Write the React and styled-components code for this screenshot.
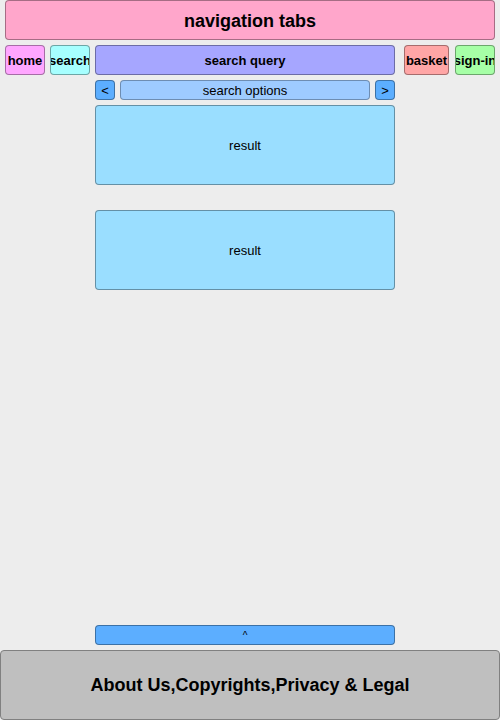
import React from 'react';
import styled, { createGlobalStyle } from 'styled-components';

const GlobalStyle = createGlobalStyle`
  html, body {
    margin: 0;
    padding: 0;
    background: #ededed;
    font-family: "Liberation Sans", Arial, sans-serif;
    color: #000;
  }
`;

const App = () => {
  return (
    <Page>
      <GlobalStyle />
      <Header>navigation tabs</Header>
      <NavRow>
        <Tab $bg="#ffa6ff" $w={40}>home</Tab>
        <Tab $bg="#a6ffff" $w={40}>search</Tab>
        <Tab $bg="#a6a6ff" $w={300} $after={4}>search query</Tab>
        <Tab $bg="#ffa6a6" $w={45}>basket</Tab>
        <Tab $bg="#a6ffa6" $w={40} $before={1}>sign-in</Tab>
      </NavRow>
      <Column>
        <OptionsRow>
          <ArrowButton>&lt;</ArrowButton>
          <Options>search options</Options>
          <ArrowButton>&gt;</ArrowButton>
        </OptionsRow>
        <Results>
          <Result>result</Result>
          <Result>result</Result>
        </Results>
      </Column>
      <Spacer />
      <Column>
        <TopButton>^</TopButton>
      </Column>
      <Footer>About Us,Copyrights,Privacy &amp; Legal</Footer>
    </Page>
  );
};

const Page = styled.div`
  min-height: 100vh;
  display: flex;
  flex-direction: column;
  box-sizing: border-box;
`;

const Header = styled.div`
  height: 40px;
  margin: 0 5px;
  padding-top: 2px;
  box-sizing: border-box;
  background: #ffa6cb;
  border: 1px solid rgba(0, 0, 0, 0.35);
  border-radius: 4px;
  display: flex;
  align-items: center;
  justify-content: center;
  font-size: 18px;
  font-weight: bold;
`;

const NavRow = styled.div`
  display: flex;
  gap: 5px;
  padding: 0 5px;
  margin-top: 5px;
  height: 30px;
`;

const Tab = styled.div`
  width: ${(p) => p.$w}px;
  flex: none;
  margin-left: ${(p) => p.$before || 0}px;
  margin-right: ${(p) => p.$after || 0}px;
  box-sizing: border-box;
  background: ${(p) => p.$bg};
  border: 1px solid rgba(0, 0, 0, 0.35);
  border-radius: 4px;
  display: flex;
  align-items: center;
  justify-content: center;
  overflow: hidden;
  white-space: nowrap;
  font-size: 13px;
  font-weight: bold;
`;

const Column = styled.div`
  width: 300px;
  margin-left: 95px;
  display: flex;
  flex-direction: column;
`;

const OptionsRow = styled.div`
  display: flex;
  gap: 5px;
  height: 20px;
  margin-top: 5px;
`;

const ArrowButton = styled.div`
  width: 20px;
  flex: none;
  box-sizing: border-box;
  background: #5caeff;
  border: 1px solid rgba(0, 0, 0, 0.35);
  border-radius: 4px;
  display: flex;
  align-items: center;
  justify-content: center;
  font-size: 13px;
`;

const Options = styled.div`
  flex: 1;
  box-sizing: border-box;
  background: #9ecbff;
  border: 1px solid rgba(0, 0, 0, 0.3);
  border-radius: 4px;
  display: flex;
  align-items: center;
  justify-content: center;
  font-size: 13px;
`;

const Results = styled.div`
  display: flex;
  flex-direction: column;
  gap: 25px;
  margin-top: 5px;
`;

const Result = styled.div`
  height: 80px;
  box-sizing: border-box;
  background: #9adeff;
  border: 1px solid rgba(0, 0, 0, 0.35);
  border-radius: 4px;
  display: flex;
  align-items: center;
  justify-content: center;
  font-size: 13px;
`;

const Spacer = styled.div`
  flex: 1;
`;

const TopButton = styled.div`
  height: 20px;
  box-sizing: border-box;
  background: #5caeff;
  border: 1px solid rgba(0, 0, 0, 0.35);
  border-radius: 4px;
  display: flex;
  align-items: center;
  justify-content: center;
  font-size: 10px;
`;

const Footer = styled.div`
  height: 70px;
  margin-top: 5px;
  box-sizing: border-box;
  background: #bfbfbf;
  border: 1px solid #808080;
  border-radius: 4px;
  display: flex;
  align-items: center;
  justify-content: center;
  font-size: 18px;
  font-weight: bold;
`;

export default App;
